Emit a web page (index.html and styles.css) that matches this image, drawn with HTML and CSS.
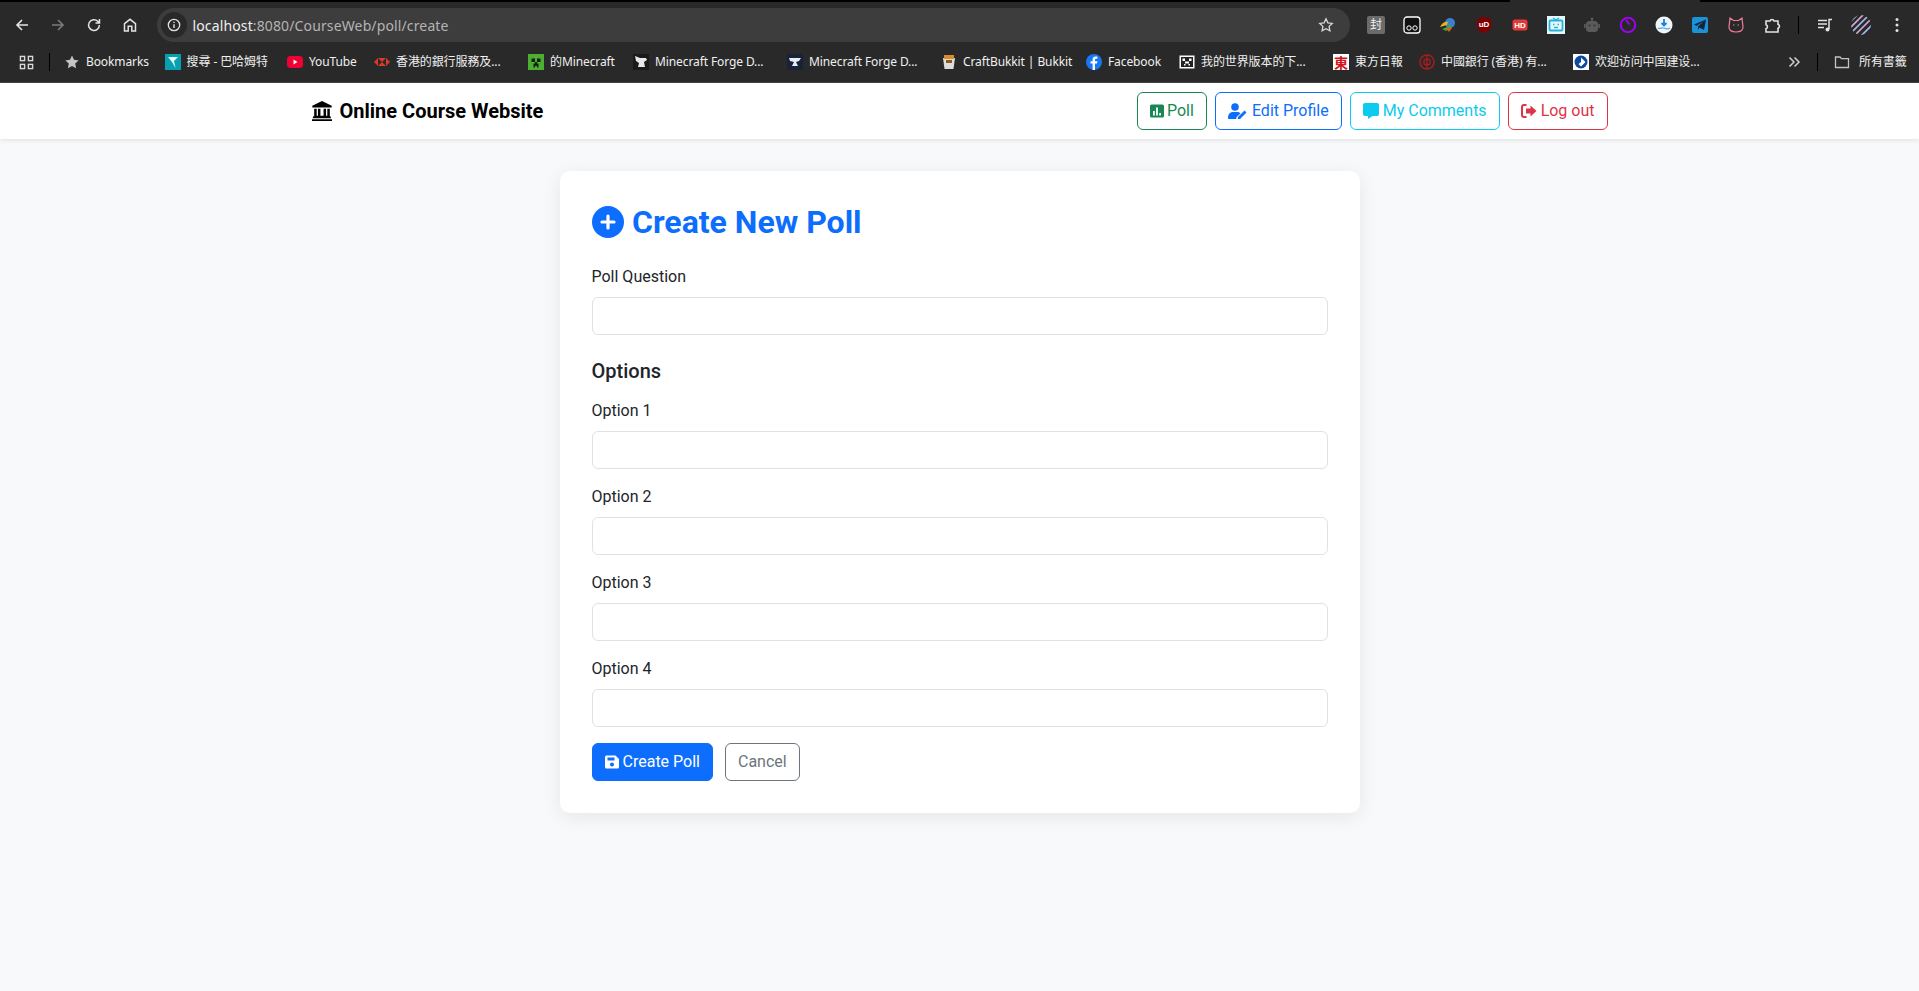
FILE: index.html
```html
<!DOCTYPE html>
<html lang="en">
<head>
<meta charset="utf-8">
<title>Create New Poll</title>
<link rel="stylesheet" href="styles.css">
</head>
<body>
<div class="browser">
  <div class="topstrip"><span class="topstrip-tab"></span></div>
  <div class="toolbar">
    <div class="nav-icons">
      <svg class="tb-ic" viewBox="0 0 16 16"><path d="M14 8H3M8 3 3 8l5 5" fill="none" stroke="#e3e3e3" stroke-width="1.6"/></svg>
      <svg class="tb-ic" viewBox="0 0 16 16"><path d="M2 8h11M8 3l5 5-5 5" fill="none" stroke="#7b7b7b" stroke-width="1.6"/></svg>
      <svg class="tb-ic" viewBox="0 0 16 16"><path d="M13.4 8a5.4 5.4 0 1 1-1.6-3.8L13.5 6M13.5 2v4h-4" fill="none" stroke="#e3e3e3" stroke-width="1.5"/></svg>
      <svg class="tb-ic" viewBox="0 0 16 16"><path d="M2.5 14V6.7L8 2.3l5.500 4.400V14h-3.700V9.300H6.200V14z" fill="none" stroke="#e3e3e3" stroke-width="1.5"/></svg>
    </div>
    <div class="omnibox">
      <span class="site-info"><svg viewBox="0 0 16 16" width="14" height="14"><circle cx="8" cy="8" r="6.500" fill="none" stroke="#e3e3e3" stroke-width="1.500"/><path d="M8 7v4.500M8 4.300v1.500" stroke="#e3e3e3" stroke-width="1.600"/></svg></span>
      <span class="url"><span class="url-host">localhost</span>:8080/CourseWeb/poll/create</span>
      <svg class="star" viewBox="0 0 16 16"><path d="m8 1.800 1.900 4 4.400.6-3.200 3 .8 4.400L8 11.700l-3.900 2.100.8-4.400-3.200-3 4.400-.6z" fill="none" stroke="#d8d8d8" stroke-width="1.300"/></svg>
    </div>
    <div class="extensions">
      <span class="ext ext-feng">封</span>
      <svg class="ext" viewBox="0 0 18 18"><rect x="1" y="1" width="16" height="16" rx="3" fill="#111" stroke="#fff" stroke-width="1.300"/><circle cx="6" cy="12" r="2.200" fill="none" stroke="#fff"/><circle cx="12" cy="12" r="2.200" fill="none" stroke="#fff"/></svg>
      <svg class="ext" viewBox="0 0 18 18"><circle cx="11" cy="7" r="5" fill="#3c7fd0"/><path d="M1 11c2-4 5-6 8-5l-1 3z" fill="#e8b21c"/><path d="M3 13c3-1 6-2 8-5l2 4-6 3z" fill="#43a33a"/><path d="M7 12h6l-3 4z" fill="#e25a1c"/></svg>
      <svg class="ext" viewBox="0 0 18 18"><path d="M9 1 16 3v8c0 3-4 5-7 6-3-1-7-3-7-6V3z" fill="#800000"/><text class="ext-txt" x="9" y="10.500">uD</text></svg>
      <svg class="ext" viewBox="0 0 18 18"><rect x="1.500" y="3.500" width="15" height="11" rx="2.500" fill="#e53935"/><text class="ext-txt" x="9" y="11.500">HD</text></svg>
      <svg class="ext" viewBox="0 0 18 18"><rect width="18" height="18" fill="#e6f7fc"/><rect x="2.500" y="4.500" width="13" height="10" rx="1" fill="none" stroke="#27b1dc" stroke-width="1.800"/><path d="M6 2l3 2 3-2M6 8.500h1.500M10.500 8.500H12M7 11.500h4" stroke="#27b1dc" fill="none" stroke-width="1.300"/></svg>
      <svg class="ext" viewBox="0 0 18 18"><rect x="3" y="5" width="12" height="11" rx="3.500" fill="#5a5a5a"/><circle cx="9" cy="2.800" r="1.400" fill="#5a5a5a"/><rect x="8.300" y="3" width="1.400" height="3" fill="#5a5a5a"/><rect x="1" y="8" width="1.600" height="4" fill="#5a5a5a"/><rect x="15.400" y="8" width="1.600" height="4" fill="#5a5a5a"/><circle cx="6.500" cy="9.500" r="1.100" fill="#333"/><circle cx="11.500" cy="9.500" r="1.100" fill="#333"/></svg>
      <svg class="ext" viewBox="0 0 18 18"><circle cx="9" cy="9" r="7.200" fill="none" stroke="#a100f2" stroke-width="2"/><path d="m7 4 3.500 4.500" stroke="#a100f2" stroke-width="1.800"/></svg>
      <svg class="ext" viewBox="0 0 18 18"><circle cx="9" cy="9" r="8.500" fill="#eef5fb"/><path d="M9 3v6M6.500 7 9 9.500 11.500 7" fill="none" stroke="#1e7fd6" stroke-width="1.800"/><path d="M3 12c2 1.500 4-1 6 0s4 1.500 6 0" fill="none" stroke="#5aa8e6" stroke-width="1.200"/></svg>
      <svg class="ext" viewBox="0 0 18 18"><rect x="1" y="1" width="16" height="16" rx="2" fill="#1a94d6"/><path d="M3 8.500 15 3.500 13 14 8.500 11.500 7 14V10.500L13 5 5.500 10z" fill="#14233a"/></svg>
      <svg class="ext" viewBox="0 0 18 18"><path d="M3 2l3.500 2.500h5L15 2l1 9c0 3.500-3 5-7 5s-7-1.500-7-5z" fill="none" stroke="#ee7f9a" stroke-width="1.200"/><path d="M6 9h1.500M10.500 9H12" stroke="#ee7f9a"/></svg>
      <svg class="ext" viewBox="0 0 18 18"><path d="M3 5h4a2.100 2.100 0 0 1 4 0h4v3.300a2.100 2.100 0 0 1 0 4V16H3v-3.300a2.100 2.100 0 0 0 0-4z" fill="none" stroke="#e3e3e3" stroke-width="1.600"/></svg>
    </div>
    <span class="tb-divider"></span>
    <svg class="tb-media" viewBox="0 0 18 18"><path d="M2 4.500h9M2 8h9M2 11.500h6" stroke="#e3e3e3" stroke-width="1.500"/><path d="M13 13V3.500h3" fill="none" stroke="#e3e3e3" stroke-width="1.500"/><circle cx="11.500" cy="13.500" r="2" fill="#e3e3e3"/></svg>
    <svg class="tb-avatar" viewBox="0 0 20 20"><defs><clipPath id="avatarClip"><circle cx="10" cy="10" r="10"/></clipPath></defs><g clip-path="url(#avatarClip)"><rect width="20" height="20" fill="#262a38"/><path d="M-2 8 8-2M0 18 18 0M10 21 21 10" stroke="#a9b8da" stroke-width="1.700"/><path d="M-2 14 14-2M4 20 20 4" stroke="#d8a4b4" stroke-width="1.700"/></g></svg>
    <svg class="tb-menu" viewBox="0 0 4 16"><circle cx="2" cy="2.500" r="1.500" fill="#e3e3e3"/><circle cx="2" cy="8" r="1.500" fill="#e3e3e3"/><circle cx="2" cy="13.500" r="1.500" fill="#e3e3e3"/></svg>
  </div>
  <div class="bookmarks">
    <svg class="bm-apps" viewBox="0 0 16 16"><g fill="none" stroke="#d8d8d8" stroke-width="1.500"><rect x="1.500" y="1.500" width="4.500" height="4.500"/><rect x="10" y="1.500" width="4.500" height="4.500"/><rect x="1.500" y="10" width="4.500" height="4.500"/><rect x="10" y="10" width="4.500" height="4.500"/></g></svg>
    <span class="bm-divider"></span>
    <div class="bm-list">
      <a class="bm"><svg class="fav" viewBox="0 0 16 16"><path d="m8 1.500 2 4.300 4.700.6-3.500 3.200.9 4.700L8 12l-4.100 2.300.9-4.700-3.500-3.200 4.700-.6z" fill="#c4c4c4"/></svg>Bookmarks</a>
      <a class="bm"><svg class="fav" viewBox="0 0 16 16"><rect width="16" height="16" fill="#08a0b0"/><path d="M3 3h10L9 7l1.500 7L7 8z" fill="#dff"/></svg>搜尋 - 巴哈姆特</a>
      <a class="bm"><svg class="fav" viewBox="0 0 16 16"><rect y="2" width="16" height="12" rx="3.500" fill="#f00033"/><path d="m6.500 5.500 4 2.500-4 2.500z" fill="#fff"/></svg>YouTube</a>
      <a class="bm"><svg class="fav" viewBox="0 0 16 16"><path d="M0 8 4 4v8zM16 8l-4-4v8zM4 4h8L8 8zM4 12h8L8 8z" fill="#db3a26"/></svg>香港的銀行服務及...</a>
      <a class="bm"><svg class="fav" viewBox="0 0 16 16"><rect width="16" height="16" fill="#4caf32"/><path d="M3.500 4.500h3.500v3.500H3.500zM9 4.500h3.500v3.500H9zM7 8h2v1.500h1.500v4h-1.500V12H7v1.500H5.500v-4H7z" fill="#14210f"/></svg>的Minecraft</a>
      <a class="bm"><svg class="fav" viewBox="0 0 16 16"><rect width="16" height="16" fill="#1a1a1a"/><path d="M2 2l5 2h6l1 2-3 2 1 5H5l1-4-3-2z" fill="#e8e8e8"/></svg>Minecraft Forge D...</a>
      <a class="bm"><svg class="fav" viewBox="0 0 16 16"><rect width="16" height="16" fill="#182238"/><path d="M2 4h12l-2 3-3 1 2 4H5l2-4-4-1z" fill="#e8ecf4"/></svg>Minecraft Forge D...</a>
      <a class="bm"><svg class="fav" viewBox="0 0 16 16"><path d="M2 4 14 4 12.500 15 3.500 15z" fill="#ddd"/><path d="M3 1h10v4H3z" fill="#d98a2c"/><path d="M5 6h6v3H5z" fill="#8a5a24"/></svg>CraftBukkit | Bukkit</a>
      <a class="bm"><svg class="fav" viewBox="0 0 16 16"><circle cx="8" cy="8" r="8" fill="#1877f2"/><path d="M9 16V9.500h2l.4-2.300H9V6c0-.8.3-1.200 1.300-1.200h1.100V2.700C11 2.600 10.300 2.500 9.600 2.500 7.800 2.500 6.600 3.600 6.600 5.600v1.600H4.500v2.300h2.100V16z" fill="#fff"/></svg>Facebook</a>
      <a class="bm"><svg class="fav" viewBox="0 0 16 16"><rect x=".5" y="1.500" width="15" height="13" fill="#fff"/><rect x="2" y="3" width="12" height="10" fill="#222"/><path d="M3.500 4.500h2.500V7H3.500zM10 4.500h2.500V7H10zM6 7.500h4v2H6zM5 10h1.500v1.500H5zM9.500 10H11v1.500H9.500z" fill="#fff"/></svg>我的世界版本的下...</a>
      <a class="bm"><span class="fav fav-dong">東</span>東方日報</a>
      <a class="bm"><svg class="fav" viewBox="0 0 16 16"><circle cx="8" cy="8" r="7" fill="none" stroke="#a81c22" stroke-width="1.500"/><rect x="5" y="5.500" width="6" height="5" rx="1" fill="none" stroke="#a81c22" stroke-width="1.300"/><path d="M8 1v14" stroke="#a81c22" stroke-width="1.300"/></svg>中國銀行 (香港) 有...</a>
      <a class="bm"><svg class="fav" viewBox="0 0 16 16"><rect width="16" height="16" fill="#fff"/><circle cx="8" cy="8" r="6.500" fill="#0a4aa0"/><path d="M8 3.500 12.500 8 8 12.500 5.500 10 8 8z" fill="#fff"/></svg>欢迎访问中国建设...</a>
    </div>
    <svg class="bm-more" viewBox="0 0 16 16"><path d="m3.500 3.500 4.500 4.500-4.500 4.500M8.500 3.500 13 8l-4.500 4.500" fill="none" stroke="#cfcfcf" stroke-width="1.500"/></svg>
    <span class="bm-divider"></span>
    <a class="bm bm-all"><svg class="fav" viewBox="0 0 16 16"><path d="M1.500 3h4.500l1.500 1.700h7v8.800h-13z" fill="none" stroke="#c4c4c4" stroke-width="1.300"/></svg>所有書籤</a>
  </div>
</div>

<nav class="navbar">
  <div class="nav-inner">
    <a class="brand">
      <svg class="brand-ic" viewBox="0 0 512 512"><path d="M256 0 504 120v48H8v-48zM56 200h64v176h32V200h64v176h80V200h64v176h32V200h64v192h16l16 48H16l16-48h24zM0 464h512v48H0z" fill="#000"/></svg>
      Online Course Website
    </a>
    <div class="nav-actions">
      <a class="btn btn-green"><svg class="ic ic-narrow" viewBox="0 0 14 16"><path d="M1.500 1.500h11A1.500 1.500 0 0 1 14 3v10a1.500 1.500 0 0 1-1.500 1.500h-11A1.500 1.500 0 0 1 0 13V3a1.500 1.500 0 0 1 1.500-1.500zM3 8v4.500h1.800V8zm3.100-3.500v8h1.800v-8zM9.200 10v2.500H11V10z" fill="#198754" fill-rule="evenodd"/></svg> Poll</a>
      <a class="btn btn-blue"><svg class="ic ic-wide" viewBox="0 0 20 16"><circle cx="7" cy="4" r="3.800" fill="#0d6efd"/><path d="M0 15c0-4 2.200-6 5-6h4c1.500 0 2.600.5 3.400 1.400L8.500 14.300 8.200 16H1c-.6 0-1-.4-1-1z" fill="#0d6efd"/><path d="m10 14 6.500-6.500 2 2L12 16l-2.300.3z" fill="#0d6efd"/></svg> Edit Profile</a>
      <a class="btn btn-cyan"><svg class="ic" viewBox="0 0 16 16"><path d="M2 0h12a2 2 0 0 1 2 2v9a2 2 0 0 1-2 2H9.500L5 16v-3H2a2 2 0 0 1-2-2V2a2 2 0 0 1 2-2z" fill="#0dcaf0"/></svg> My Comments</a>
      <a class="btn btn-red"><svg class="ic" viewBox="0 0 16 16"><path d="M5.500 2H3a2 2 0 0 0-2 2v8a2 2 0 0 0 2 2h2.500" fill="none" stroke="#dc3545" stroke-width="2"/><path d="M9.500 2.500 15.500 8l-6 5.500V10.500H5v-5h4.500z" fill="#dc3545"/></svg> Log out</a>
    </div>
  </div>
</nav>

<main class="page">
  <section class="card">
    <h2 class="card-title"><svg class="title-ic" viewBox="0 0 32 32"><circle cx="16" cy="16" r="16" fill="#0d6efd"/><path d="M16 10v12M10 16h12" stroke="#fff" stroke-width="3.200" stroke-linecap="round"/></svg> Create New Poll</h2>
    <form class="poll-form">
      <div class="field">
        <label class="field-label" for="q">Poll Question</label>
        <input class="field-input" id="q" type="text">
      </div>
      <h5 class="options-title">Options</h5>
      <div class="field">
        <label class="field-label" for="o1">Option 1</label>
        <input class="field-input" id="o1" type="text">
      </div>
      <div class="field">
        <label class="field-label" for="o2">Option 2</label>
        <input class="field-input" id="o2" type="text">
      </div>
      <div class="field">
        <label class="field-label" for="o3">Option 3</label>
        <input class="field-input" id="o3" type="text">
      </div>
      <div class="field">
        <label class="field-label" for="o4">Option 4</label>
        <input class="field-input" id="o4" type="text">
      </div>
      <div class="form-actions">
        <button class="btn btn-primary" type="button"><svg class="ic ic-narrow" viewBox="0 0 14 16"><path d="M1.500 1.500h9L14 5v8a1.500 1.500 0 0 1-1.500 1.500h-11A1.500 1.500 0 0 1 0 13V3a1.500 1.500 0 0 1 1.500-1.500zM2.500 3.500v3h7v-3zM7 8.500a2 2 0 1 0 0 4 2 2 0 0 0 0-4z" fill="#fff" fill-rule="evenodd"/></svg> Create Poll</button>
        <a class="btn btn-grey">Cancel</a>
      </div>
    </form>
  </section>
</main>
</body>
</html>
```

FILE: styles.css
```css
* { box-sizing: border-box; }
html, body { margin: 0; padding: 0; }
body {
  height: 991px;
  overflow: hidden;
  background: #f8f9fa;
  font-family: Roboto, "Noto Sans", sans-serif;
  font-size: 16px;
  line-height: 1.5;
  color: #212529;
}
a { text-decoration: none; }

.browser { height: 83px; background: #292929; border-bottom: 1px solid #444; font-family: "Noto Sans", "Noto Sans CJK TC", sans-serif; display: flex; flex-direction: column; }
.topstrip { height: 2px; background: #000; position: relative; flex: none; }
.topstrip-tab { position: absolute; left: 1510px; top: 0; width: 190px; height: 2px; background: #292929; }
.toolbar { height: 40px; flex: none; display: flex; align-items: center; padding: 6px 0 0 14px; }
.nav-icons { width: 142.500px; display: flex; gap: 20px; flex: none; }
.tb-ic { width: 16px; height: 16px; flex: none; }
.omnibox { width: 1193.500px; height: 34px; flex: none; border-radius: 17px; background: #3d3d3d; display: flex; align-items: center; padding: 0 16px 0 4px; }
.site-info { width: 26px; height: 26px; border-radius: 50%; background: #292929; display: flex; align-items: center; justify-content: center; flex: none; }
.url { margin-left: 6px; font-size: 14px; letter-spacing: .13px; color: #b4b4b4; flex: 1; white-space: nowrap; }
.url-host { color: #f0f0f0; }
.star { width: 16px; height: 16px; }
.extensions { display: flex; align-items: center; gap: 18px; margin-left: 17px; }
.ext { width: 18px; height: 18px; flex: none; display: block; }
.ext-feng { background: #6b6b6b; color: #eee; font-size: 12px; line-height: 18px; text-align: center; border-radius: 2px; }
.ext-txt { font-family: "Liberation Sans", sans-serif; font-size: 8px; font-weight: 700; text-anchor: middle; fill: #fff; }
.tb-divider { width: 1px; height: 18px; background: #000; margin-left: 17px; flex: none; }
.tb-media { width: 18px; height: 18px; margin-left: 17px; flex: none; }
.tb-avatar { width: 20px; height: 20px; margin-left: 17px; flex: none; }
.tb-menu { width: 4px; height: 16px; margin-left: 24px; flex: none; }

.bookmarks { height: 40px; flex: none; display: flex; align-items: center; padding-left: 19px; color: #f0f0f0; font-size: 12px; }
.bm-apps { width: 15px; height: 15px; flex: none; }
.bm-divider { width: 1px; height: 18px; background: #000; flex: none; margin-left: 15px; }
.bm-list { display: grid; grid-template-columns: 100.600px 122.400px 87px 154px 105px 154px 154px 145px 93px 154px 86px 154px 154px; margin-left: 14px; flex: none; }
.bm { display: flex; align-items: center; gap: 6px; white-space: nowrap; color: #f0f0f0; letter-spacing: -.1px; }
.fav { width: 16px; height: 16px; flex: none; }
.fav-dong { display: block; background: #fff; font-family: "Noto Sans CJK TC", sans-serif; font-size: 14px; line-height: 16px; font-weight: 700; letter-spacing: 0; text-align: center; color: #d3121b; }
.bm-more { width: 16px; height: 16px; flex: none; margin-left: 59px; }
.bm-all { margin-left: 16px; gap: 9px; }

.navbar { height: 56px; background: #fff; box-shadow: 0 2px 4px rgba(0, 0, 0, .075); position: relative; }
.nav-inner { width: 1320px; height: 55px; margin: 0 auto; padding: 0 12px; display: flex; align-items: center; justify-content: space-between; }
.brand { display: flex; align-items: center; gap: 8px; font-size: 20px; font-weight: 700; color: #000; line-height: 30px; }
.brand-ic { width: 20px; height: 20px; }
.nav-actions { display: flex; gap: 8px; }

.btn { display: inline-flex; align-items: center; gap: 4px; height: 38px; padding: 0 12px; font-family: inherit; font-size: 16px; line-height: 24px; border: 1px solid; border-radius: 6px; background: transparent; white-space: nowrap; }
.btn-green { color: #198754; border-color: #198754; gap: 3px; }
.btn-blue { color: #0d6efd; border-color: #0d6efd; }
.btn-cyan { color: #0dcaf0; border-color: #0dcaf0; }
.btn-red { color: #dc3545; border-color: #dc3545; }
.btn-primary { color: #fff; background: #0d6efd; border-color: #0d6efd; }
.btn-grey { color: #6c757d; border-color: #6c757d; }
.ic { width: 16px; height: 16px; flex: none; }
.ic-wide { width: 20px; }
.ic-narrow { width: 14px; }

.page { padding-top: 32px; display: flex; justify-content: center; }
.card { width: 800px; height: 642px; padding: 32px; background: #fff; border-radius: 10px; box-shadow: 0 4px 20px rgba(0, 0, 0, .08); }
.card-title { margin: 0 0 24px; display: flex; align-items: center; gap: 8.500px; font-size: 32px; font-weight: 700; line-height: 38.400px; color: #0d6efd; }
.title-ic { width: 32px; height: 32px; }
.field { margin-bottom: 16px; }
.field-label { display: block; margin-bottom: 8px; }
.field-input { display: block; width: 100%; height: 38px; padding: 6px 12px; border: 1px solid #dee2e6; border-radius: 6px; background: #fff; font: inherit; }
.options-title { margin: 24px 0 16px; font-size: 20px; font-weight: 500; line-height: 24px; color: #212529; }
.form-actions { display: flex; gap: 12px; }
```
